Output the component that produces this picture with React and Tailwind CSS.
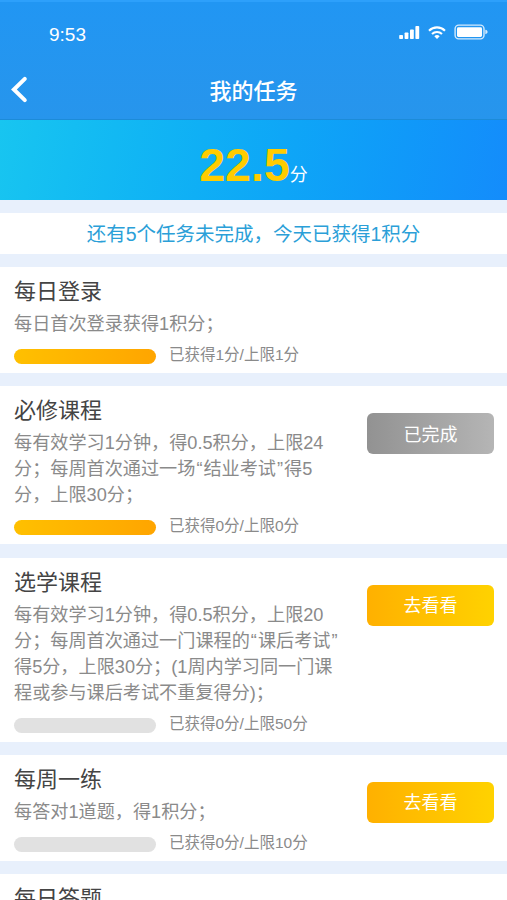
import React from "react";

const tasks = [
  {
    title: "每日登录",
    desc: "每日首次登录获得1积分；",
    progress: "已获得1分/上限1分",
    full: true,
  },
  {
    title: "必修课程",
    desc: "每有效学习1分钟，得0.5积分，上限24\n分；每周首次通过一场“结业考试”得5\n分，上限30分；",
    progress: "已获得0分/上限0分",
    full: true,
    action: "已完成",
    done: true,
  },
  {
    title: "选学课程",
    desc: "每有效学习1分钟，得0.5积分，上限20\n分；每周首次通过一门课程的“课后考试”\n得5分，上限30分；(1周内学习同一门课\n程或参与课后考试不重复得分)；",
    progress: "已获得0分/上限50分",
    action: "去看看",
  },
  {
    title: "每周一练",
    desc: "每答对1道题，得1积分；",
    progress: "已获得0分/上限10分",
    action: "去看看",
  },
  {
    title: "每日答题",
  },
];

const StatusBar = () => (
  <div className="flex h-[61px] items-start justify-between pl-[49px] pr-[18px] text-white">
    <span className="mt-[23px] text-[19px] leading-[23px]">9:53</span>
    <div className="mt-[24px] flex items-center">
      <svg width="21" height="15" viewBox="0 0 21 15" fill="currentColor">
        <rect x="0.2" y="10" width="3.8" height="4" rx="0.8" />
        <rect x="5.6" y="7.5" width="3.8" height="6.5" rx="0.8" />
        <rect x="11" y="4.5" width="3.8" height="9.5" rx="0.8" />
        <rect x="16.4" y="1" width="3.8" height="13" rx="0.8" />
      </svg>
      <svg
        className="ml-[8px]"
        width="18"
        height="15"
        viewBox="0 0 18 15"
        fill="none"
        stroke="currentColor"
        strokeWidth="2.1"
      >
        <path d="M1 5.7a11.4 11.4 0 0 1 16 0" />
        <path d="M4 9a7.2 7.2 0 0 1 10 0" />
        <path
          d="M6.3 11.2a3.9 3.9 0 0 1 5.4 0L9 14z"
          fill="currentColor"
          stroke="none"
        />
      </svg>
      <svg className="ml-[8px]" width="35" height="16" viewBox="0 0 35 16">
        <rect
          x="1.1"
          y="1.1"
          width="28.9"
          height="13.8"
          rx="3.6"
          fill="none"
          stroke="#d3eafd"
          strokeWidth="1.4"
        />
        <rect x="3" y="3.2" width="25" height="9.8" rx="1.4" fill="#fff" />
        <path d="M31.3 5.8c3 .6 3 3.8 0 4.4z" fill="#d3eafd" />
      </svg>
    </div>
  </div>
);

const NavBar = () => (
  <div className="grid h-[58px] grid-cols-[1fr_auto_1fr] items-center text-white">
    <svg
      className="ml-[10px]"
      width="18"
      height="28"
      viewBox="0 0 18 28"
      fill="none"
      stroke="currentColor"
      strokeWidth="4"
      strokeLinecap="round"
      strokeLinejoin="miter"
    >
      <path d="M14.8 2.9 3.9 13.5 14.8 24.1" />
    </svg>
    <h1 className="pt-[3px] text-[22px] font-medium leading-[30px]">
      我的任务
    </h1>
  </div>
);

const TaskDesc = ({ text }) => (
  <p className="mt-[4px] whitespace-pre text-[18.15px] leading-[26px] text-[#8a8a8a]">
    {text.split(/([“”])/).map((part, index) =>
      part === "“" || part === "”" ? (
        <span key={index} className="mx-px">
          {part}
        </span>
      ) : (
        part
      )
    )}
  </p>
);

const TaskCard = ({ item }) => (
  <section className="flex items-start justify-between bg-white pb-[5px] pl-[14px] pr-[13px] pt-[10px]">
    <div className="shrink-0">
      <h2 className="text-[22px] leading-[30px] text-[#444]">{item.title}</h2>
      {item.desc && <TaskDesc text={item.desc} />}
      {item.progress && (
        <div className="mt-[6px] flex h-[25px] items-start">
          <div
            className={`mt-[6px] h-[15px] w-[142px] rounded-full ${
              item.full
                ? "bg-linear-to-r from-[#ffc000] to-[#ffa500]"
                : "bg-[#e1e1e1]"
            }`}
          />
          <span className="ml-[13px] pt-px text-[15.5px] leading-[22px] text-[#8a8a8a]">
            {item.progress}
          </span>
        </div>
      )}
    </div>
    {item.action && (
      <button
        className={`mt-[17px] h-[41px] w-[127px] rounded-[6px] pt-[3px] text-[18px] text-white ${
          item.done
            ? "bg-linear-to-r from-[#929292] to-[#b5b5b5]"
            : "bg-linear-to-r from-[#ffb000] to-[#ffd200]"
        }`}
      >
        {item.action}
      </button>
    )}
  </section>
);

const App = () => {
  return (
    <div className="h-[900px] w-[507px] overflow-hidden bg-[#e8f0fc] font-['Liberation_Sans','Noto_Sans_CJK_SC',sans-serif]">
      <header className="h-[119px] border-t-2 border-[#2da0fb] bg-linear-to-b from-[#2196f3] to-[#2795ec]">
        <div className="-mt-[2px]">
          <StatusBar />
          <NavBar />
        </div>
      </header>
      <div className="flex h-[81px] items-baseline justify-center border-t border-[#1c8bd8] bg-linear-100 from-[#18c5f0] to-[#148cfb] pt-[19px]">
        <span className="text-[46.5px] font-bold leading-[52px] text-[#ffcc00]">
          22.5
        </span>
        <span className="text-[18px] text-white">分</span>
      </div>
      <div className="mt-[13px] h-[41px] bg-white pt-px text-center text-[19.5px] leading-[41px] text-[#2b9fd8]">
        还有5个任务未完成，今天已获得1积分
      </div>
      <main className="mt-[13px] flex flex-col gap-[13.3px]">
        {tasks.map((item) => (
          <TaskCard key={item.title} item={item} />
        ))}
      </main>
    </div>
  );
};

export default App;
